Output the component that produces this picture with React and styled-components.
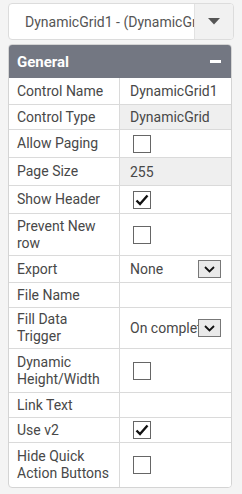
import React from "react";
import styled, { createGlobalStyle } from "styled-components";

const Global = createGlobalStyle`
  html, body { margin: 0; padding: 0; background: #f4f4f4; }
  body { font-family: Roboto, "Noto Sans", Arial, sans-serif; }
`;

const Page = styled.div`
  padding: 3px 8px 4px 8px;
  width: 242px;
  box-sizing: border-box;
`;

const Picker = styled.div`
  display: flex;
  height: 37px;
  width: 226px;
  box-sizing: border-box;
  border: 1px solid #dcdcdc;
  border-radius: 4px;
  background: #fff;
  overflow: hidden;
`;

const PickerText = styled.div`
  flex: 1;
  min-width: 0;
  padding-left: 16px;
  display: flex;
  align-items: center;
  font-size: 14px;
  color: #555;
  white-space: nowrap;
  overflow: hidden;
  text-overflow: clip;
`;

const PickerButton = styled.div`
  width: 38px;
  border-left: 1px solid #e2e2e2;
  background: #f1f1f1;
  display: flex;
  align-items: center;
  justify-content: center;
`;

const Panel = styled.div`
  margin-top: 4px;
  width: 224px;
  box-sizing: border-box;
  border: 1px solid #d4d4d4;
  border-radius: 4px;
  overflow: hidden;
  background: #fff;
`;

const Header = styled.div`
  height: 33px;
  background: #737782;
  display: flex;
  align-items: center;
  justify-content: space-between;
  padding: 0 10px 0 8px;
  color: #fff;
  font-weight: bold;
  font-size: 15px;
`;

const Minus = styled.div`
  width: 11px;
  height: 3px;
  background: #fff;
`;

const Row = styled.div`
  display: flex;
  min-height: ${(p) => p.$h}px;
  border-top: 1px solid #dadada;
  &:first-of-type { border-top: none; }
`;

const Label = styled.div`
  width: 111px;
  box-sizing: border-box;
  padding: 2px 8px;
  border-right: 1px solid #dadada;
  font-size: 14px;
  line-height: 17px;
  color: #484848;
  display: flex;
  align-items: center;
`;

const Value = styled.div`
  flex: 1;
  min-width: 0;
  padding: 0 0 0 10px;
  display: flex;
  align-items: center;
  font-size: 14px;
  color: #484848;
  background: ${(p) => (p.$ro ? "#efefef" : "#fff")};
  white-space: nowrap;
  overflow: hidden;
`;

const Check = styled.div`
  width: 16px;
  height: 16px;
  margin-left: 3px;
  border: 1px solid #666;
  background: #fff;
  display: flex;
  align-items: center;
  justify-content: center;
`;

const SelectText = styled.span`
  flex: 1;
  min-width: 0;
  overflow: hidden;
  white-space: nowrap;
  text-overflow: clip;
`;

const SelectBtn = styled.div`
  width: 21px;
  height: 16px;
  margin-right: 10px;
  flex: none;
  border: 1px solid #777;
  background: #eaeaea;
  display: flex;
  align-items: center;
  justify-content: center;
`;

const Tick = () => (
  <svg width="14" height="12" viewBox="0 0 14 12">
    <path d="M1.5 6.5 L5 10 L12.5 1.5" fill="none" stroke="#111" strokeWidth="2.4" />
  </svg>
);

const Chevron = () => (
  <svg width="11" height="7" viewBox="0 0 11 7">
    <path d="M1 1 L5.5 5.5 L10 1" fill="none" stroke="#111" strokeWidth="1.8" />
  </svg>
);

const rows = [
  { label: "Control Name", h: 26, value: "DynamicGrid1" },
  { label: "Control Type", h: 24, value: "DynamicGrid", ro: true },
  { label: "Allow Paging", h: 27, check: false },
  { label: "Page Size", h: 27, value: "255", ro: true },
  { label: "Show Header", h: 27, check: true },
  { label: "Prevent New row", h: 41, check: false },
  { label: "Export", h: 26, select: "None" },
  { label: "File Name", h: 24, value: "" },
  { label: "Fill Data Trigger", h: 40, select: "On complete" },
  { label: "Dynamic Height/Width", h: 43, check: false },
  { label: "Link Text", h: 24, value: "" },
  { label: "Use v2", h: 24, check: true },
  { label: "Hide Quick Action Buttons", h: 44, check: false },
];

export default function App() {
  return (
    <>
      <Global />
      <Page>
        <Picker>
          <PickerText>DynamicGrid1 - (DynamicGrid)</PickerText>
          <PickerButton>
            <svg width="12" height="7" viewBox="0 0 12 7">
              <path d="M0 0 H12 L6 6.5 Z" fill="#555" />
            </svg>
          </PickerButton>
        </Picker>
        <Panel>
          <Header>
            <span>General</span>
            <Minus />
          </Header>
          <div>
            {rows.map((r) => (
              <Row key={r.label} $h={r.h}>
                <Label>{r.label}</Label>
                <Value $ro={r.ro}>
                  {r.check !== undefined ? (
                    <Check>{r.check ? <Tick /> : null}</Check>
                  ) : r.select ? (
                    <>
                      <SelectText>{r.select}</SelectText>
                      <SelectBtn>
                        <Chevron />
                      </SelectBtn>
                    </>
                  ) : (
                    r.value
                  )}
                </Value>
              </Row>
            ))}
          </div>
        </Panel>
      </Page>
    </>
  );
}
